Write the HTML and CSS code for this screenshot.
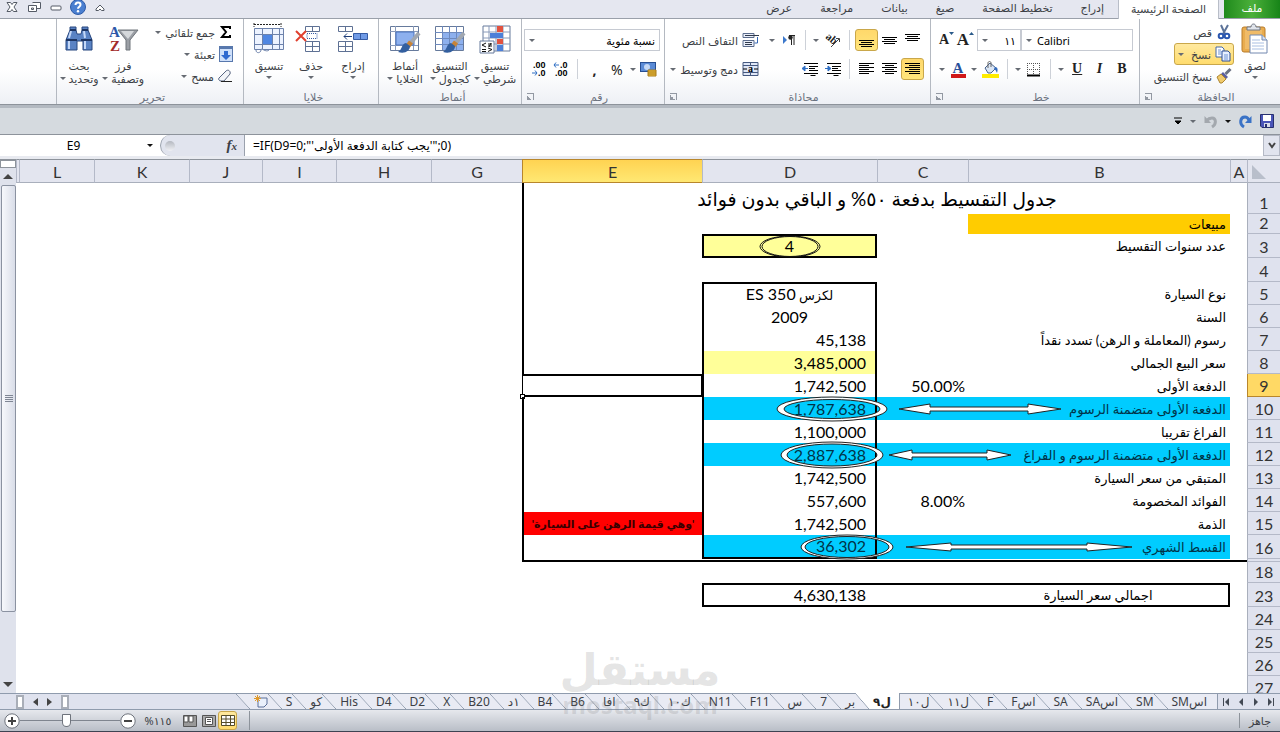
FILE: index.html
```html
<!DOCTYPE html>
<html lang="ar" dir="rtl">
<head>
  <meta charset="UTF-8" />
  <meta name="viewport" content="width=device-width, initial-scale=1.0"/>
  <title>جدول التقسيط</title>
  <link rel="stylesheet" href="styles.css">
</head>
<body>
  <nav class="tabs">
    <button class="tab file">ملف</button>
    <button class="tab active">الصفحة الرئيسية</button>
    <button class="tab">إدراج</button>
    <button class="tab">تخطيط الصفحة</button>
    <button class="tab">صيغ</button>
    <button class="tab">بيانات</button>
    <button class="tab">مراجعة</button>
    <button class="tab">عرض</button>
    <div class="window-buttons">
      <button aria-label="تصغير الشريط"><svg width="12" height="12" viewBox="0 0 12 12"><path d="M2 8l4-4 4 4v1.500H7.500L6 8 4.500 9.500H2z" fill="#fff" stroke="#555b66"/></svg></button>
      <button aria-label="تعليمات"><svg width="16" height="16" viewBox="0 0 16 16"><circle cx="8" cy="8" r="7.500" fill="#4a7fd0" stroke="#2c5aa8"/><path d="M5.500 6c0-3.500 5-3.200 5-.3 0 2-2.500 2-2.500 4" fill="none" stroke="#fff" stroke-width="2"/><circle cx="8" cy="12.200" r="1.200" fill="#fff"/></svg></button>
      <button aria-label="تصغير"><svg width="12" height="12" viewBox="0 0 12 12"><rect x="1" y="5" width="10" height="4" rx="1" fill="#fff" stroke="#555b66"/></svg></button>
      <button aria-label="استعادة"><svg width="13" height="12" viewBox="0 0 13 12"><path d="M4.500 1.500h8v6h-4M.5 4.500h8v6h-8zM3.500 7h2v1.500h-2z" fill="#fff" stroke="#555b66"/></svg></button>
      <button aria-label="إغلاق"><svg width="12" height="12" viewBox="0 0 12 12"><path d="M1 1.500h3.500L6 3.500l1.500-2H11L8 6l3 4.500H7.500L6 8.500l-1.500 2H1L4 6z" fill="#fff" stroke="#555b66"/></svg></button>
    </div>
  </nav>

  <header class="ribbon">
    <section class="group clipboard">
      <div class="group-body">
        <button class="big">
          <svg width="28" height="32" viewBox="0 0 28 32"><rect x="1" y="4" width="23" height="25" rx="2" fill="#e9ac4e" stroke="#b97c2a"/><rect x="4" y="7" width="17" height="19" fill="#f0bb68"/><path d="M6 7V4h4c0-4 5-4 5 0h4v3z" fill="#dfe3ea" stroke="#6f7683"/><path d="M9 12h12l5 5v13H9z" fill="#fff" stroke="#7288b0"/><path d="M21 12v5h5" fill="#d6e1f3" stroke="#7288b0"/><path d="M11 17h8M11 20h12M11 23h12M11 26h12" stroke="#a9bfe2"/></svg>
          <span>لصق</span><i class="caret"></i>
        </button>
        <div class="small-list">
          <button class="small"><svg width="16" height="16" viewBox="0 0 16 16"><path d="M5 1l4 9M12 1L7 10" stroke="#5c7399" stroke-width="2"/><circle cx="5" cy="12" r="2.300" fill="none" stroke="#2a57b0" stroke-width="2"/><circle cx="11" cy="12" r="2.300" fill="none" stroke="#2a57b0" stroke-width="2"/></svg><span>قص</span></button>
          <button class="small on split"><svg width="16" height="16" viewBox="0 0 16 16"><path d="M1 1h6l2 2v8H1z" fill="#fff" stroke="#4468a8"/><path d="M7 5h6l2 2v8H7z" fill="#e8f0ff" stroke="#2c4f96"/><path d="M3 4h3M3 6h4M3 8h4M9 9h4M9 11h4M9 13h4" stroke="#6f93d3"/></svg><span>نسخ</span><i class="caret"></i></button>
          <button class="small"><svg width="16" height="16" viewBox="0 0 16 16"><path d="M14.500 1l-5 5" stroke="#6a7182" stroke-width="3"/><path d="M7 4l5 5-2 2-5-5z" fill="#5b5fa0"/><path d="M5 6l5 5-4 4H4L1 9z" fill="#f1cb6c" stroke="#ac8431"/></svg><span>نسخ التنسيق</span></button>
        </div>
      </div>
      <footer><span>الحافظة</span><i class="launch"></i></footer>
    </section>

    <section class="group font">
      <div class="group-body rows">
        <div class="row">
          <label class="combo name"><select aria-label="الخط"><option>Calibri</option></select><i class="caret"></i></label>
          <label class="combo size"><select aria-label="حجم الخط"><option>١١</option></select><i class="caret"></i></label>
          <button class="icon serif grow">A<svg width="5" height="4" viewBox="0 0 5 4"><path d="M0 3l2.500-3L5 3z" fill="#2a5a8a"/></svg></button>
          <button class="icon serif shrink">A<svg width="5" height="4" viewBox="0 0 5 4"><path d="M0 0h5L2.500 3z" fill="#2a5a8a"/></svg></button>
        </div>
        <div class="row">
          <button class="icon serif"><b>B</b></button>
          <button class="icon serif"><em>I</em></button>
          <button class="icon serif"><u>U</u></button>
          <i class="caret"></i><i class="sep"></i>
          <button class="icon"><svg width="15" height="15" viewBox="0 0 15 15"><path d="M1.500 1v12M7.500 1v12M13.500 1v12M1 1.500h13M1 7.500h13" stroke="#555" stroke-dasharray="1 1"/><path d="M1 13.500h13" stroke="#000" stroke-width="2"/></svg></button>
          <i class="caret"></i><i class="sep"></i>
          <button class="icon"><svg width="17" height="17" viewBox="0 0 17 17"><path d="M3 7l5-5 6 5-5 5H6z" fill="#dbe6f5" stroke="#45618c"/><path d="M6 7V2c0-2 3-2 3 0v4" fill="none" stroke="#666"/><path d="M13 6c3 0 3 3 2 6-1-2-1-3-3-4z" fill="#346bbd"/><rect y="13" width="17" height="4" fill="#ffec00"/></svg></button>
          <i class="caret"></i>
          <button class="icon"><svg width="16" height="17" viewBox="0 0 16 17"><text x="8" y="12" text-anchor="middle" class="svg-serif" font-size="15" fill="#28509a">A</text><rect x="1" y="13" width="15" height="4" fill="#d01818"/></svg></button>
          <i class="caret"></i>
        </div>
      </div>
      <footer><span>خط</span><i class="launch"></i></footer>
    </section>

    <section class="group align">
      <div class="group-body">
        <div class="rows">
          <div class="row">
            <button class="icon"><svg width="15" height="15" viewBox="0 0 15 15"><path d="M0 1.500h15M2 3.500h11M0 5.500h15M2 7.500h11" stroke="#000" /></svg></button>
            <button class="icon"><svg width="15" height="15" viewBox="0 0 15 15"><path d="M0 4.500h15M2 6.500h11M0 8.500h15M2 10.500h11" stroke="#000"/></svg></button>
            <button class="icon on"><svg width="15" height="15" viewBox="0 0 15 15"><path d="M0 7.500h15M2 9.500h11M0 11.500h15M2 13.500h11" stroke="#000"/></svg></button>
            <i class="sep"></i>
            <button class="icon"><svg width="18" height="16" viewBox="0 0 18 16"><text x="1" y="8" transform="rotate(40 4 7)" class="svg-serif" font-size="11" fill="#222">ab</text><path d="M7 15l8-8M12 6.500h3.500V10" fill="none" stroke="#444"/></svg></button>
            <i class="caret"></i><i class="sep"></i>
            <button class="icon"><svg width="14" height="14" viewBox="0 0 14 14"><path d="M1 3l4 4-4 4z" fill="#3d79cc"/><path d="M9.500 2v10M12 2v10M7 2.500h6" stroke="#222"/><circle cx="8.500" cy="4.500" r="2.200" fill="#222"/></svg></button>
            <i class="caret"></i>
          </div>
          <div class="row">
            <button class="icon on"><svg width="15" height="15" viewBox="0 0 15 15"><path d="M0 1.500h15M4 3.500h11M0 5.500h15M4 7.500h11M0 9.500h15M4 11.500h11" stroke="#000"/></svg></button>
            <button class="icon"><svg width="15" height="15" viewBox="0 0 15 15"><path d="M0 1.500h15M3 3.500h9M0 5.500h15M3 7.500h9M0 9.500h15M3 11.500h9" stroke="#000"/></svg></button>
            <button class="icon"><svg width="15" height="15" viewBox="0 0 15 15"><path d="M0 1.500h15M0 3.500h10M0 5.500h15M0 7.500h10M0 9.500h15M0 11.500h10" stroke="#000"/></svg></button>
            <i class="sep"></i>
            <button class="icon"><svg width="16" height="15" viewBox="0 0 16 15"><path d="M2 1.500h14M7 4.500h9M7 6.500h6M7 8.500h9M2 11.500h14M8.500 13.500h5" stroke="#000"/><path d="M0 6.500h4M3 4l3 2.500L3 9z" fill="#2f6fc4" stroke="#2f6fc4"/></svg></button>
            <button class="icon"><svg width="16" height="15" viewBox="0 0 16 15"><path d="M2 1.500h14M7 4.500h9M7 6.500h6M7 8.500h9M2 11.500h14M8.500 13.500h5" stroke="#000"/><path d="M2 6.500h4M3 4L0 6.500 3 9z" fill="#2f6fc4" stroke="#2f6fc4"/></svg></button>
          </div>
        </div>
        <i class="sep tall"></i>
        <div class="rows">
          <div class="row"><button class="small"><svg width="17" height="16" viewBox="0 0 17 16"><path d="M1 1.500h11v4H1zM1 8.500h11v6H1z" fill="#e9eefa" stroke="#5b6c8c"/><path d="M3 3.500h14M3 10.500h7M3 12.500h7" stroke="#303a4c"/><path d="M15.500 5v6h-3" fill="none" stroke="#3567b4"/></svg><span>التفاف النص</span></button></div>
          <div class="row"><button class="small"><svg width="17" height="16" viewBox="0 0 17 16"><path d="M1 1.500h15v13H1zM1 4.500h15M1 11.500h15M8.500 1v3M8.500 12v3" fill="#dfe7f7" stroke="#44587f"/><text x="8.500" y="11" text-anchor="middle" class="svg-serif" font-size="10">a</text><path d="M1 8h4M12 8h4" stroke="#000"/></svg><span>دمج وتوسيط</span><i class="caret"></i></button></div>
        </div>
      </div>
      <footer><span>محاذاة</span><i class="launch"></i></footer>
    </section>

    <section class="group number">
      <div class="group-body rows">
        <div class="row"><label class="combo format"><select aria-label="تنسيق الأرقام"><option>نسبة مئوية</option></select><i class="caret"></i></label></div>
        <div class="row">
          <button class="icon"><svg width="17" height="16" viewBox="0 0 17 16"><rect x=".5" y="1.500" width="15" height="9" fill="#5b8bd6" stroke="#284f93"/><ellipse cx="7" cy="6" rx="3" ry="3" fill="#c5d8f5"/><path d="M8 9h8v6H8z" fill="#efc13f" stroke="#a87a18"/><path d="M8 11h8M8 13h8" stroke="#a87a18"/></svg></button>
          <i class="caret"></i>
          <button class="icon">%</button>
          <button class="icon comma">,</button>
          <i class="sep"></i>
          <button class="icon"><svg width="17" height="16" viewBox="0 0 17 16"><text x="7" y="7" class="svg-num">.0</text><text x="2" y="15" class="svg-num">.00</text><path d="M1 4h5M3 1.500L1 4l2 2.500" fill="none" stroke="#2f6fc4"/></svg></button>
          <button class="icon"><svg width="17" height="16" viewBox="0 0 17 16"><text x="2" y="7" class="svg-num">.00</text><text x="7" y="15" class="svg-num">.0</text><path d="M1 12h5M4 9.500L6 12l-2 2.500" fill="none" stroke="#2f6fc4"/></svg></button>
        </div>
      </div>
      <footer><span>رقم</span><i class="launch"></i></footer>
    </section>

    <section class="group styles">
      <div class="group-body">
        <button class="big">
          <svg width="32" height="32" viewBox="0 0 32 32"><path d="M4 3h27v25H4z" fill="#fff" stroke="#667a9c"/><path d="M4 9h27M4 15h27M4 21h27M10 3v25M17 3v25M24 3v25" stroke="#8a9bba"/><path d="M18 3h6v6h-6zM18 16h6v5h-6z" fill="#e2523f"/><path d="M11 10h13v5H11zM18 22h6v6h-6z" fill="#4c7fd8"/><path d="M1 18h14v12H1z" fill="#fff" stroke="#667a9c"/><path d="M7 20l-4 2 4 2M3 26.500h4M9 21h4M9 23h4M12 20l-2 4M9 25l4 1.500-4 2M3 28.500h4" fill="none" stroke="#111"/></svg>
          <span>تنسيق</span><span>شرطي <i class="caret"></i></span>
        </button>
        <button class="big">
          <svg width="32" height="32" viewBox="0 0 32 32"><path d="M1.500 3.500h28v24h-28z" fill="#fff" stroke="#667a9c"/><path d="M8 9h21v18H8z" fill="#8db0ee"/><path d="M1 9.500h28M1 15.500h28M1 21.500h28M8.500 3v24M15.500 3v24M22.500 3v24" stroke="#6d89bd"/><path d="M30 10L20 22" stroke="#a1a7b0" stroke-width="4"/><path d="M22 19l-3 4" stroke="#c78337" stroke-width="5"/><path d="M17 20c-5 1-3 6-8 9 7 2 12-1 12-6z" fill="#335f9f"/></svg>
          <span>التنسيق</span><span>كجدول <i class="caret"></i></span>
        </button>
        <button class="big">
          <svg width="32" height="32" viewBox="0 0 32 32"><path d="M1.500 3.500h28v24h-28z" fill="#fff" stroke="#667a9c"/><path d="M1 8.500h28M1 22.500h28M6.500 3v24M24.500 3v24" stroke="#8a9bba"/><path d="M7 9h18v13H7z" fill="#8db0ee" stroke="#4a73bd"/><path d="M30 10L20 22" stroke="#a1a7b0" stroke-width="4"/><path d="M22 19l-3 4" stroke="#c78337" stroke-width="5"/><path d="M17 20c-5 1-3 6-8 9 7 2 12-1 12-6z" fill="#335f9f"/></svg>
          <span>أنماط</span><span>الخلايا <i class="caret"></i></span>
        </button>
      </div>
      <footer><span>أنماط</span></footer>
    </section>

    <section class="group cells">
      <div class="group-body">
        <button class="big">
          <svg width="32" height="32" viewBox="0 0 32 32"><path d="M1.500 3.500h14v5h-14zM8.500 3v5M1.500 18.500h14v10h-14zM1 23.500h14M8.500 18v10" fill="#fff" stroke="#5e7194"/><path d="M16.500 10.500h14v6h-14zM23.500 10v6" fill="#6f9ae6" stroke="#355ba4"/><path d="M7 13.500h8M10 10.500l-3 3 3 3" fill="none" stroke="#1d3c78"/></svg>
          <span>إدراج</span><i class="caret"></i>
        </button>
        <button class="big">
          <svg width="32" height="32" viewBox="0 0 32 32"><path d="M10.500 3.500h14v5h-14zM17.500 3v5M10.500 18.500h14v10h-14zM10 23.500h14M17.500 18v10" fill="#fff" stroke="#5e7194"/><path d="M12 10.500h10v5H12z" fill="none" stroke="#355ba4" stroke-dasharray="1 1"/><path d="M1 8l10 10M11 8L1 18" stroke="#e0402f" stroke-width="2"/></svg>
          <span>حذف</span><i class="caret"></i>
        </button>
        <button class="big">
          <svg width="32" height="32" viewBox="0 0 32 32"><path d="M1 1.500h27M1 0v4M28 0v4" stroke="#222" stroke-dasharray="2 1"/><path d="M1.500 5.500h29v21h-29zM1 11.500h29M1 21.500h29M9.500 5v21M19.500 5v21M26.500 5v21" fill="#edf3ff" stroke="#6d82ab"/><path d="M10 12h9v9h-9z" fill="#4f86e2"/><path d="M3 27c0 4 5 3 5 0s5 3 8 0" fill="#fff" stroke="#6d82ab"/></svg>
          <span>تنسيق</span><i class="caret"></i>
        </button>
      </div>
      <footer><span>خلايا</span></footer>
    </section>

    <section class="group editing">
      <div class="group-body">
        <div class="small-list">
          <button class="small"><svg width="14" height="14" viewBox="0 0 14 14"><path d="M11 4V2H3l4 5-4 5h8v-2" fill="none" stroke="#000" stroke-width="2"/></svg><span>جمع تلقائي</span><i class="caret"></i></button>
          <button class="small"><svg width="14" height="16" viewBox="0 0 14 16"><rect x=".5" y=".5" width="13" height="15" fill="#cfe0fa" stroke="#5878ad"/><path d="M1 2h12" stroke="#5878ad" stroke-width="2"/><path d="M5 5h4v4h3l-5 5-5-5h3z" fill="#2f6ad0"/></svg><span>تعبئة</span><i class="caret"></i></button>
          <button class="small"><svg width="15" height="14" viewBox="0 0 15 14"><path d="M1 9l7-7c2-2 5 0 4 3l-6 7H3c-2 0-3-2-2-3z" fill="#f2f4f8" stroke="#566480"/><path d="M3 12.500h11" stroke="#222"/></svg><span>مسح</span><i class="caret"></i></button>
        </div>
        <button class="big">
          <svg width="32" height="32" viewBox="0 0 32 32"><path d="M11 7h20l-8 10v10h-4V17z" fill="#9b9fa5" stroke="#6f747b"/><path d="M14 8h13l-6 8z" fill="#d5d8db"/><text x="2" y="14" class="svg-serif" font-size="15" fill="#2d58a8">A</text><text x="3" y="28" class="svg-serif" font-size="15" fill="#a32b2b">Z</text></svg>
          <span>فرز</span><span>وتصفية <i class="caret"></i></span>
        </button>
        <button class="big">
          <svg width="32" height="32" viewBox="0 0 32 32"><path d="M3 17l4-10V4h6v3l1 4h4l1-4V4h6v3l4 10v10h-9v-9h-6v9H3z" fill="#5a83c4" stroke="#27467e"/><path d="M6 18v8M22 18v8M8 8l-2 7M21 8l1 7" stroke="#c4d8f8" stroke-width="2"/><path d="M3 17h11M18 17h11M7 7h6M19 7h6" stroke="#1d3563" stroke-width="2"/></svg>
          <span>بحث</span><span>وتحديد <i class="caret"></i></span>
        </button>
      </div>
      <footer><span>تحرير</span></footer>
    </section>
  </header>

  <div class="quick-access">
    <button aria-label="حفظ"><svg width="14" height="14" viewBox="0 0 14 14"><path d="M.5.5h13v13H2l-1.500-1.500z" fill="#4a55b8" stroke="#27306f"/><path d="M3 1h8v6H3z" fill="#fff"/><path d="M4 9h6v4H4z" fill="#d8dcea"/><path d="M5 10h2v3H5z" fill="#27306f"/></svg></button>
    <button aria-label="إعادة"><svg width="13" height="13" viewBox="0 0 13 13"><path d="M5 12C0 9 1 2 6 2c2 0 3 1 4 3" fill="none" stroke="#3a72c6" stroke-width="3"/><path d="M12.500 1v7H6z" fill="#3a72c6"/></svg></button>
    <i class="caret dark"></i>
    <button aria-label="تراجع"><svg width="13" height="13" viewBox="0 0 13 13"><path d="M8 12c5-3 4-9 0-9-3 0-4 1-6 3" fill="none" stroke="#a3a8ae" stroke-width="3"/><path d="M.5 1v7H7z" fill="#a3a8ae"/></svg></button>
    <i class="caret"></i>
    <button aria-label="تخصيص"><svg width="8" height="8" viewBox="0 0 8 8"><path d="M0 1h8M1 4h6L4 7z" stroke="#000" fill="#000"/></svg></button>
  </div>

  <div class="formula-bar">
    <div class="name-box"><input type="text" value="E9" aria-label="مربع الاسم"><i class="caret dark"></i></div>
    <div class="fx"><i class="knob"></i><button aria-label="إدراج دالة"><em>f<small>x</small></em></button></div>
    <input class="formula" type="text" aria-label="الصيغة" value="=IF(D9=0;&quot;'يجب كتابة الدفعة الأولى&lrm;'&quot;;0)">
    <button class="expand" aria-label="توسيع"><svg width="8" height="7" viewBox="0 0 8 7"><path d="M1 1l3 4 3-4" fill="none" stroke="#444" stroke-width="2"/></svg></button>
  </div>

  <main class="workspace">
    <div class="sheet">
      <table>
        <colgroup>
          <col class="c-num"><col class="c-a"><col class="c-b"><col class="c-c"><col class="c-d"><col class="c-e"><col class="c-g"><col class="c-h"><col class="c-i"><col class="c-j"><col class="c-k"><col class="c-l"><col>
        </colgroup>
        <thead>
          <tr><th class="corner"><svg width="14" height="14" viewBox="0 0 14 14"><path d="M0 0v14h14z" fill="#b9bfcb"/></svg></th><th>A</th><th>B</th><th>C</th><th>D</th><th class="sel">E</th><th>G</th><th>H</th><th>I</th><th>J</th><th>K</th><th>L</th><th></th></tr>
        </thead>
        <tbody>
          <tr class="r1"><th>1</th><td></td><td colspan="4" class="title edge">جدول التقسيط بدفعة ٥٠% و الباقي بدون فوائد</td><td colspan="7"></td></tr>
          <tr class="r2"><th>2</th><td></td><td class="gold">مبيعات</td><td></td><td></td><td class="edge"></td><td colspan="7"></td></tr>
          <tr class="r24"><th>3</th><td></td><td>عدد سنوات التقسيط</td><td></td><td class="years">4<svg class="ring r-years" width="62" height="23" viewBox="0 0 62 23"><ellipse cx="31" cy="11.500" rx="30" ry="10.500"/><ellipse cx="31" cy="11.500" rx="28" ry="10"/></svg></td><td class="edge"></td><td colspan="7"></td></tr>
          <tr class="r24"><th>4</th><td></td><td></td><td></td><td></td><td class="edge"></td><td colspan="7"></td></tr>
          <tr><th>5</th><td></td><td>نوع السيارة</td><td></td><td class="box top mid"><bdi>لكزس</bdi> <bdi class="latin">ES 350</bdi></td><td class="edge"></td><td colspan="7"></td></tr>
          <tr><th>6</th><td></td><td>السنة</td><td></td><td class="box mid num">2009</td><td class="edge"></td><td colspan="7"></td></tr>
          <tr><th>7</th><td></td><td>رسوم (المعاملة و الرهن) تسدد نقداً</td><td></td><td class="box num">45,138</td><td class="edge"></td><td colspan="7"></td></tr>
          <tr><th>8</th><td></td><td>سعر البيع الجمالي</td><td></td><td class="box num yellow">3,485,000</td><td class="edge"></td><td colspan="7"></td></tr>
          <tr><th class="sel">9</th><td></td><td>الدفعة الأولى</td><td class="num">50.00%</td><td class="box num">1,742,500</td><td class="current"><i class="handle"></i></td><td colspan="7"></td></tr>
          <tr class="cyan"><th>10</th><td></td><td>الدفعة الأولى متضمنة الرسوم</td><td></td><td class="box num">1,787,638<svg class="ring r-down" width="112" height="26" viewBox="0 0 112 26"><path class="band" fill-rule="evenodd" d="M1 13a55 12 0 0 1 110 0a55 12 0 0 1-110 0zM8 13a48 9.500 0 0 0 96 0a48 9.500 0 0 0-96 0z"/></svg><svg class="arrow a-down" width="164" height="12" viewBox="0 0 164 12"><path d="M1 6L32 1v3h98V1l33 5-33 5V8H32v3z"/></svg></td><td class="edge"></td><td colspan="7"></td></tr>
          <tr><th>11</th><td></td><td>الفراغ تقريبا</td><td></td><td class="box num">1,100,000</td><td class="edge"></td><td colspan="7"></td></tr>
          <tr class="cyan"><th>12</th><td></td><td>الدفعة الأولى متضمنة الرسوم و الفراغ</td><td></td><td class="box num">2,887,638<svg class="ring r-total" width="104" height="28" viewBox="0 0 104 28"><path class="band" fill-rule="evenodd" d="M1 14a51 13 0 0 1 102 0a51 13 0 0 1-102 0zM7 14a45 11 0 0 0 90 0a45 11 0 0 0-90 0z"/></svg><svg class="arrow a-total" width="124" height="12" viewBox="0 0 124 12"><path d="M1 6L24 1v3h75V1l24 5-24 5V8H24v3z"/></svg></td><td class="edge"></td><td colspan="7"></td></tr>
          <tr><th>13</th><td></td><td>المتبقي من سعر السيارة</td><td></td><td class="box num">1,742,500</td><td class="edge"></td><td colspan="7"></td></tr>
          <tr><th>14</th><td></td><td>الفوائد المخصومة</td><td class="num">8.00%</td><td class="box num">557,600</td><td class="edge"></td><td colspan="7"></td></tr>
          <tr><th>15</th><td></td><td>الذمة</td><td></td><td class="box num">1,742,500</td><td class="edge red">'وهي قيمة الرهن على السيارة'</td><td colspan="7"></td></tr>
          <tr class="r24 cyan"><th>16</th><td></td><td>القسط الشهري</td><td></td><td class="box bottom num">36,302<svg class="ring r-month" width="94" height="26" viewBox="0 0 94 26"><path class="band" fill-rule="evenodd" d="M1 13a46 12 0 0 1 92 0a46 12 0 0 1-92 0zM5 13a42 10.500 0 0 0 84 0a42 10.500 0 0 0-84 0z"/></svg><svg class="arrow a-month" width="228" height="12" viewBox="0 0 228 12"><path d="M1 6L46 2v2h136V2l45 4-45 4V8H46v2z"/></svg></td><td class="edge"></td><td colspan="7"></td></tr>
          <tr class="r17"><th></th><td class="line"></td><td class="line"></td><td class="line"></td><td class="line"></td><td class="line edge"></td><td colspan="7"></td></tr>
          <tr class="r18"><th>18</th><td></td><td colspan="4"></td><td colspan="7"></td></tr>
          <tr class="r24 sum"><th>23</th><td></td><td class="mid">اجمالي سعر السيارة</td><td></td><td class="num">4,630,138</td><td></td><td colspan="7"></td></tr>
          <tr><th>24</th><td colspan="12"></td></tr>
          <tr><th>25</th><td colspan="12"></td></tr>
          <tr><th>26</th><td colspan="12"></td></tr>
          <tr><th>27</th><td colspan="12"></td></tr>
        </tbody>
      </table>
    </div>
    <div class="scrollbar">
      <i class="splitter"></i>
      <button aria-label="أعلى"><i class="up"></i></button>
      <div class="track"><div class="thumb"><i></i></div></div>
      <button aria-label="أسفل"><i class="down"></i></button>
    </div>
    <div class="watermark"><strong>مستقل</strong><span>mostaql.com</span></div>
  </main>

  <div class="sheet-tabs">
    <div class="sheet-nav">
      <button aria-label="الأول"><svg width="8" height="8" viewBox="0 0 8 8"><path d="M1 0l4 4-4 4zM6 0h1v8H6z" fill="#444a55"/></svg></button>
      <button aria-label="السابق"><svg width="8" height="8" viewBox="0 0 8 8"><path d="M2 0l4 4-4 4z" fill="#444a55"/></svg></button>
      <button aria-label="التالي"><svg width="8" height="8" viewBox="0 0 8 8"><path d="M6 0L2 4l4 4z" fill="#444a55"/></svg></button>
      <button aria-label="الأخير"><svg width="8" height="8" viewBox="0 0 8 8"><path d="M7 0L3 4l4 4zM1 0h1v8H1z" fill="#444a55"/></svg></button>
    </div>
    <div class="sheet-list">
      <button>اسSM</button><button>SM</button><button>اسSA</button><button>SA</button><button>اسF</button><button>F</button><button>ل١١</button><button class="before">ل١٠</button><button class="active">ل٩</button><button>بر</button><button>7</button><button>س</button><button>F11</button><button>N11</button><button>ك١٠</button><button>ك٩</button><button>افا</button><button>B6</button><button>B4</button><button>١د</button><button>B20</button><button>X</button><button>D2</button><button>D4</button><button>His</button><button>كو</button><button>S</button><button aria-label="ورقة جديدة"><svg width="14" height="13" viewBox="0 0 14 13"><path d="M4 3h9v6l-3 3H4z" fill="#eaf0fb" stroke="#5a6f98"/><path d="M3.500 0v7M0 3.500h7M1 1l5 5M6 1L1 6" stroke="#e09a2b"/></svg></button>
    </div>
    <div class="h-scroll"><i class="grip"></i><i class="next"></i><i class="prev"></i><i class="grip"></i></div>
  </div>

  <footer class="status">
    <span class="ready">جاهز</span>
    <div class="views">
      <button class="on" aria-label="عادي"><svg width="14" height="12" viewBox="0 0 14 12"><path d="M.5.5h13v10H.5zM.5 4h13M.5 7.500h13M5 .5v10M9.500 .5v10" fill="#fff" stroke="#554d2a"/></svg></button>
      <button aria-label="تخطيط الصفحة"><svg width="14" height="12" viewBox="0 0 14 12"><path d="M.5.5h13v11H.5z" fill="#aaa" stroke="#555"/><path d="M3.500 2.500h7v7h-7zM5 4.500h4M5 6.500h4" fill="#fff" stroke="#555"/></svg></button>
      <button aria-label="فواصل الصفحات"><svg width="14" height="12" viewBox="0 0 14 12"><path d="M.5.5h13v11H.5z" fill="#999" stroke="#555"/><path d="M1 1h4v6H1zM6 1h4v6H6z" fill="#fff" stroke="#555"/></svg></button>
    </div>
    <label for="zoom">%١١٥</label>
    <button class="round" aria-label="تصغير العرض"><svg width="16" height="16" viewBox="0 0 16 16"><circle cx="8" cy="8" r="7.200" fill="#fff" stroke="#6e737c"/><path d="M4 8h8" stroke="#444" stroke-width="2"/></svg></button>
    <input id="zoom" type="range" min="0" max="100" value="54">
    <button class="round" aria-label="تكبير العرض"><svg width="16" height="16" viewBox="0 0 16 16"><circle cx="8" cy="8" r="7.200" fill="#fff" stroke="#6e737c"/><path d="M4 8h8M8 4v8" stroke="#444" stroke-width="2"/></svg></button>
  </footer>
</body>
</html>
```
FILE: styles.css
```css
* {
  box-sizing: border-box;
}

body {
  margin: 0;
  height: 100vh;
  display: flex;
  flex-direction: column;
  overflow: hidden;
  font-family: "Noto Sans", "DejaVu Sans", sans-serif;
  font-size: 11px;
  color: #3c3f46;
  background: #fff;
  border-bottom: 1px solid #3d4352;
}

button {
  display: flex;
  align-items: center;
  justify-content: center;
  padding: 0;
  border: 0;
  background: none;
  font: inherit;
  color: inherit;
  white-space: nowrap;
}

svg {
  display: block;
  flex-shrink: 0;
  overflow: visible;
}

input,
select {
  border: 0;
  padding: 0;
  margin: 0;
  background: none;
  font: inherit;
  color: #000;
  min-width: 0;
  appearance: none;
}

.caret {
  display: inline-block;
  flex-shrink: 0;
  width: 0;
  height: 0;
  border: 3px solid transparent;
  border-top-color: #666b73;
  border-bottom: 0;
}

.caret.dark {
  border-top-color: #111;
}

.svg-serif {
  font-family: "Liberation Serif", serif;
  font-weight: bold;
  direction: ltr;
}

.svg-num {
  font-family: "Liberation Sans", sans-serif;
  font-size: 9px;
  font-weight: bold;
  direction: ltr;
}

/* Ribbon tabs */
.tabs {
  display: flex;
  height: 19px;
  flex-shrink: 0;
  background: #e5e7f0;
  border-bottom: 1px solid #9aa0aa;
}

.tab {
  padding: 0 14px 3px;
}

.tab.file {
  width: 56px;
  margin-left: 5px;
  color: #fff;
  background: linear-gradient(90deg, #1f8a1c, #4bb03a 50%, #178418);
}

.tab.active {
  width: 101px;
  padding: 0 0 3px;
  height: 19px;
  background: #fff;
  border: 1px solid #b9bec8;
  border-width: 0 1px;
}

.window-buttons {
  display: flex;
  margin-right: auto;
  padding: 0 0 4px 1px;
}

.window-buttons button {
  width: 22px;
}

/* Ribbon groups */
.ribbon {
  display: flex;
  height: 86px;
  flex-shrink: 0;
  background: linear-gradient(#fff 60%, #eef0f5);
  border-bottom: 1px solid #8d939b;
}

.group {
  display: flex;
  flex-direction: column;
  border-left: 1px solid #b4b9c1;
  flex-shrink: 0;
}

.group footer {
  display: flex;
  align-items: center;
  height: 15px;
  padding-left: 5px;
  color: #6b7280;
}

.group footer span {
  flex: 1;
  text-align: center;
}

.launch {
  width: 7px;
  height: 7px;
  border: 1px solid #9298a2;
  border-width: 1px 1px 0 0;
  background: linear-gradient(45deg, #9298a2 50%, transparent 50%) left bottom / 5px 5px no-repeat;
}

.group-body {
  display: flex;
  height: 70px;
  padding: 2px 6px 0;
}

.clipboard { width: 141px; }
.font { width: 209px; }
.align { width: 266px; }
.number { width: 143px; }
.styles { width: 143px; }
.cells { width: 135px; }
.editing { width: 187px; }

.rows {
  display: flex;
  flex-direction: column;
  gap: 7px;
}

.group-body .rows {
  padding-top: 8px;
}

.group-body.rows {
  padding-top: 10px;
}

.row {
  display: flex;
  align-items: center;
  height: 22px;
}

.row > .caret {
  margin: 0 2px;
}

.big {
  flex-direction: column;
  justify-content: flex-start;
  width: 42px;
  padding-top: 2px;
  line-height: 13px;
}

.big span {
  display: flex;
  align-items: center;
  gap: 3px;
}

.big svg {
  margin-bottom: 4px;
}

.big > .caret {
  margin-top: 4px;
}

.clipboard .group-body {
  padding-right: 4px;
}

.small-list {
  display: flex;
  flex-direction: column;
  align-items: flex-start;
}

.small {
  height: 22px;
  gap: 4px;
  padding: 0 2px;
}

.small.split {
  padding-left: 0;
}

.small.split .caret {
  box-sizing: content-box;
  margin: 0 3px;
}

.on {
  background: linear-gradient(#ffe9a0, #ffdc6e);
  border: 1px solid #c9a74a;
  border-radius: 3px;
}

.icon {
  width: 23px;
  height: 22px;
  font-size: 14px;
  color: #222;
}

.icon.on {
  background: linear-gradient(#ffd86b, #ffe57c);
}

.serif {
  font-family: "Liberation Serif", serif;
  font-weight: bold;
  font-size: 14px;
}

.grow,
.shrink {
  direction: ltr;
}

.grow {
  font-size: 17px;
  margin-right: 2px;
}

.grow svg,
.shrink svg {
  align-self: flex-start;
  margin-top: 3px;
}

.sep {
  width: 1px;
  height: 20px;
  margin: 0 5px;
  background: #cdd1d8;
}

.sep.tall {
  height: 56px;
  margin: 4px 3px 0;
}

.combo {
  display: flex;
  align-items: center;
  flex-shrink: 0;
  height: 22px;
  padding: 0 4px;
  border: 1px solid #c6cad2;
  background: #fff;
}

.combo select {
  flex: 1;
}

.combo.name {
  width: 112px;
}

.combo.name select {
  direction: ltr;
  padding-left: 5px;
}

.combo.size {
  width: 44px;
}

.combo.format {
  width: 136px;
}

.number .group-body {
  padding-right: 4px;
}

.comma {
  font-weight: bold;
}

.styles .big {
  width: 45px;
}

.styles .group-body,
.cells .group-body {
  justify-content: center;
  padding: 2px 0 0;
}

.editing .small-list {
  width: 82px;
  margin-left: 8px;
}

.editing .big {
  width: 46px;
}

.editing .group-body {
  padding: 2px 8px 0 0;
}

/* Quick access toolbar */
.quick-access {
  display: flex;
  align-items: center;
  gap: 8px;
  height: 29px;
  flex-shrink: 0;
  padding: 0 6px;
  background: #d5dadf;
  border-top: 3px solid #b3b9c1;
}

/* Formula bar */
.formula-bar {
  display: flex;
  direction: ltr;
  height: 25px;
  flex-shrink: 0;
  border-top: 1px solid #8d939b;
  border-bottom: 3px solid #e8eaf0;
  background: #fff;
  font-size: 12px;
}

.name-box {
  display: flex;
  align-items: center;
  width: 160px;
  padding-right: 7px;
}

.name-box input {
  flex: 1;
  text-align: center;
}

.fx {
  display: flex;
  align-items: center;
  justify-content: space-between;
  width: 85px;
  padding: 0 7px 0 4px;
  background: #e1e4ee;
  border: 1px solid #9aa1ad;
  border-width: 0 1px;
  border-radius: 11px 0 0 11px;
}

.knob {
  width: 10px;
  height: 10px;
  border-radius: 50%;
  background: linear-gradient(#b4b8c0, #f0f1f5);
}

.fx em {
  font: italic bold 15px "Liberation Serif", serif;
}

.fx small {
  font-size: 11px;
}

.formula {
  flex: 1;
  padding-left: 8px;
}

.expand {
  width: 17px;
  background: #e1e4ee;
  border: 1px solid #b4b9c5;
}

/* Sheet */
.workspace {
  position: relative;
  display: flex;
  flex: 1;
  min-height: 0;
}

.sheet {
  flex: 1;
  min-width: 0;
  overflow: hidden;
}

table {
  width: 100%;
  table-layout: fixed;
  border-collapse: separate;
  border-spacing: 0;
  font-family: Lato, "DejaVu Sans", sans-serif;
  color: #000;
}

.c-num { width: 33px; }
.c-a { width: 17px; }
.c-b { width: 262px; }
.c-c { width: 91px; }
.c-d { width: 175px; }
.c-e { width: 180px; }
.c-g { width: 91px; }
.c-h { width: 95px; }
.c-i { width: 74px; }
.c-j { width: 73px; }
.c-k { width: 95px; }
.c-l { width: 75px; }

th,
td {
  padding: 0;
  overflow: visible;
  white-space: nowrap;
}

th {
  font-weight: normal;
  font-size: 16px;
  line-height: 17px;
  color: #333;
}

thead th {
  height: 24px;
  background: #e3e5ef;
  border-top: 1px solid #8d939b;
  border-bottom: 1px solid #a9afbc;
  border-left: 1px solid #b4b9c8;
}

thead .sel {
  background: linear-gradient(#ffd352, #ffe873);
  border-color: #b8862c;
}

.corner svg {
  margin: 2px 14px 0 0;
}

tbody th {
  padding-bottom: 2px;
  background: #dfe2ee;
  border-left: 1px solid #a9afbc;
  border-bottom: 1px solid #b4b9c8;
  vertical-align: bottom;
}

tbody .sel {
  background: #ffd965;
  border-color: #b8862c;
}

tbody tr {
  height: 23px;
}

tbody .r1 { height: 31px; }
tbody .r2 { height: 20px; }
tbody .r24 { height: 24px; }
tbody .r17 { height: 3px; }
tbody .r18 { height: 21px; }

td {
  position: relative;
  font-size: 13px;
  line-height: 18px;
}

td:nth-child(3) {
  padding-right: 4px;
}

.r1 .title {
  padding: 0;
  font-size: 19px;
  line-height: 28px;
  text-align: center;
}

.edge {
  border-left: 2px solid #000;
}

.gold {
  background: #ffcc00;
}

.years {
  border: 2px solid #000;
  background: #ffff99;
  text-align: center;
  font-size: 16px;
}

.box {
  border: 2px solid #000;
  border-width: 0 2px;
}

.box.top {
  border-top-width: 2px;
}

.box.bottom {
  border-bottom-width: 2px;
}

.num {
  direction: ltr;
  text-align: right;
  font-size: 16px;
  padding-right: 3px;
}

.box.num,
.sum .num {
  padding-right: 9px;
}

td.mid,
td.box.mid {
  text-align: center;
  padding-right: 0;
}

.latin {
  font-size: 16px;
}

.yellow {
  background: #ffff99;
}

.cyan td:nth-child(3),
.cyan td:nth-child(4),
.cyan td:nth-child(5) {
  background: #00ccff;
  color: #003348;
}

.current {
  border: 1px solid #000;
  border-width: 2px 1px;
}

.handle {
  position: absolute;
  left: -3px;
  bottom: -4px;
  width: 5px;
  height: 5px;
  background: #fff;
  border: 1px solid #000;
}

.red {
  background: #ff0000;
  color: #3a0000;
  font-weight: bold;
  font-size: 11px;
  text-align: center;
}

.line {
  border-bottom: 2px solid #000;
}

.sum td:nth-child(3) {
  border: 2px solid #000;
  border-left: 0;
}

.sum td:nth-child(4) {
  border: 2px solid #000;
  border-width: 2px 0;
}

.sum td:nth-child(5) {
  border: 2px solid #000;
  border-right: 0;
}

/* Shapes drawn over the cells */
.ring,
.arrow {
  position: absolute;
  z-index: 1;
}

.ring {
  fill: none;
  stroke: #111;
}

.arrow,
.band {
  fill: #fff;
  stroke: #222;
}

.r-years { left: 55px; top: -1px; }
.r-down { left: 72px; top: -1px; }
.r-total { left: 76px; top: -2px; }
.r-month { left: 96px; top: -1px; }
.a-down { left: 194px; top: 6px; }
.a-total { left: 184px; top: 6px; }
.a-month { left: 201px; top: 6px; }

/* Vertical scrollbar */
.scrollbar {
  display: flex;
  flex-direction: column;
  width: 16px;
  background: #dfe2ec;
  border-top: 1px solid #8d939b;
}

.scrollbar button {
  height: 17px;
}

.splitter {
  height: 8px;
  background: #fff;
  border: 1px solid #8d939b;
}

.up,
.down {
  border: 5px solid transparent;
}

.up {
  border-top: 0;
  border-bottom-color: #444;
}

.down {
  border-bottom: 0;
  border-top-color: #444;
}

.track {
  flex: 1;
}

.thumb {
  display: flex;
  align-items: center;
  justify-content: center;
  height: 87%;
  margin-left: 1px;
  background: linear-gradient(90deg, #f7f8fc, #d9dde8);
  border: 1px solid #8b92a1;
  border-radius: 2px;
}

.thumb i {
  width: 8px;
  height: 7px;
  background: repeating-linear-gradient(#7f8694 0 1px, transparent 1px 2px);
}

.watermark {
  position: absolute;
  left: 50%;
  bottom: -24px;
  z-index: 2;
  display: flex;
  flex-direction: column;
  align-items: center;
  width: 156px;
  margin-left: -78px;
  color: rgba(120, 120, 120, 0.2);
  font-size: 24px;
  font-weight: bold;
  line-height: 24px;
  pointer-events: none;
}

.watermark strong {
  font-size: 44px;
  line-height: 50px;
}

/* Sheet tabs */
.sheet-tabs {
  display: flex;
  height: 17px;
  flex-shrink: 0;
  background: #dfe2ee;
  border-top: 1px solid #8f9bad;
  border-bottom: 1px solid #8f9bad;
}

.sheet-nav {
  display: flex;
  align-items: center;
  justify-content: space-around;
  width: 63px;
  padding-right: 2px;
  border-left: 1px solid #8f9bad;
}

.sheet-list {
  display: flex;
  padding-right: 10px;
  background: #e9ebf4;
  font-size: 12px;
}

.sheet-list button {
  padding: 0 0 0 18px;
  background: linear-gradient(to top right, transparent 47%, #8f9bad 50%, transparent 53%) left / 14px 100% no-repeat;
}

.sheet-list .before {
  padding-left: 8px;
  background: none;
  border-left: 1px solid #8f9bad;
}

.sheet-list .active {
  margin-top: -1px;
  padding-right: 8px;
  font-weight: bold;
  color: #222;
  background: linear-gradient(to top right, #e9ebf4 47%, #8f9bad 50%, #fff 53%) left / 14px 100% no-repeat, #fff;
}

.sheet-list button:last-child {
  background: linear-gradient(to top right, #dfe2ee 47%, #8f9bad 50%, #e9ebf4 53%) left / 14px 100% no-repeat;
}

.h-scroll {
  display: flex;
  align-items: center;
  gap: 9px;
  margin-right: auto;
  padding-left: 16px;
}

.grip {
  width: 8px;
  height: 14px;
  background: #fff;
  border: 2px solid #a9aeb8;
}

.next,
.prev {
  border: 4px solid transparent;
}

.next {
  border-right: 0;
  border-left: 5px solid #444;
}

.prev {
  border-left: 0;
  border-right: 5px solid #444;
}

/* Status bar */
.status {
  display: flex;
  align-items: center;
  height: 21px;
  flex-shrink: 0;
  padding-left: 4px;
  background: linear-gradient(#e6e8ed, #b9bec7);
}

.ready {
  width: 41px;
  text-align: center;
  border-left: 1px solid #8d939b;
}

.views {
  display: flex;
  margin-right: auto;
  padding-right: 12px;
  border-right: 1px solid #8d939b;
}

.views button {
  width: 19px;
  height: 19px;
}

.status label {
  direction: ltr;
  width: 44px;
  text-align: center;
}

.status input {
  width: 100px;
  height: 16px;
  background: linear-gradient(#7f858f, #7f858f) center / 100% 1px no-repeat;
}

.status input::-webkit-slider-thumb {
  appearance: none;
  width: 9px;
  height: 13px;
  background: #fff;
  border: 1px solid #6e737c;
  border-radius: 1px 1px 5px 5px;
}
```
